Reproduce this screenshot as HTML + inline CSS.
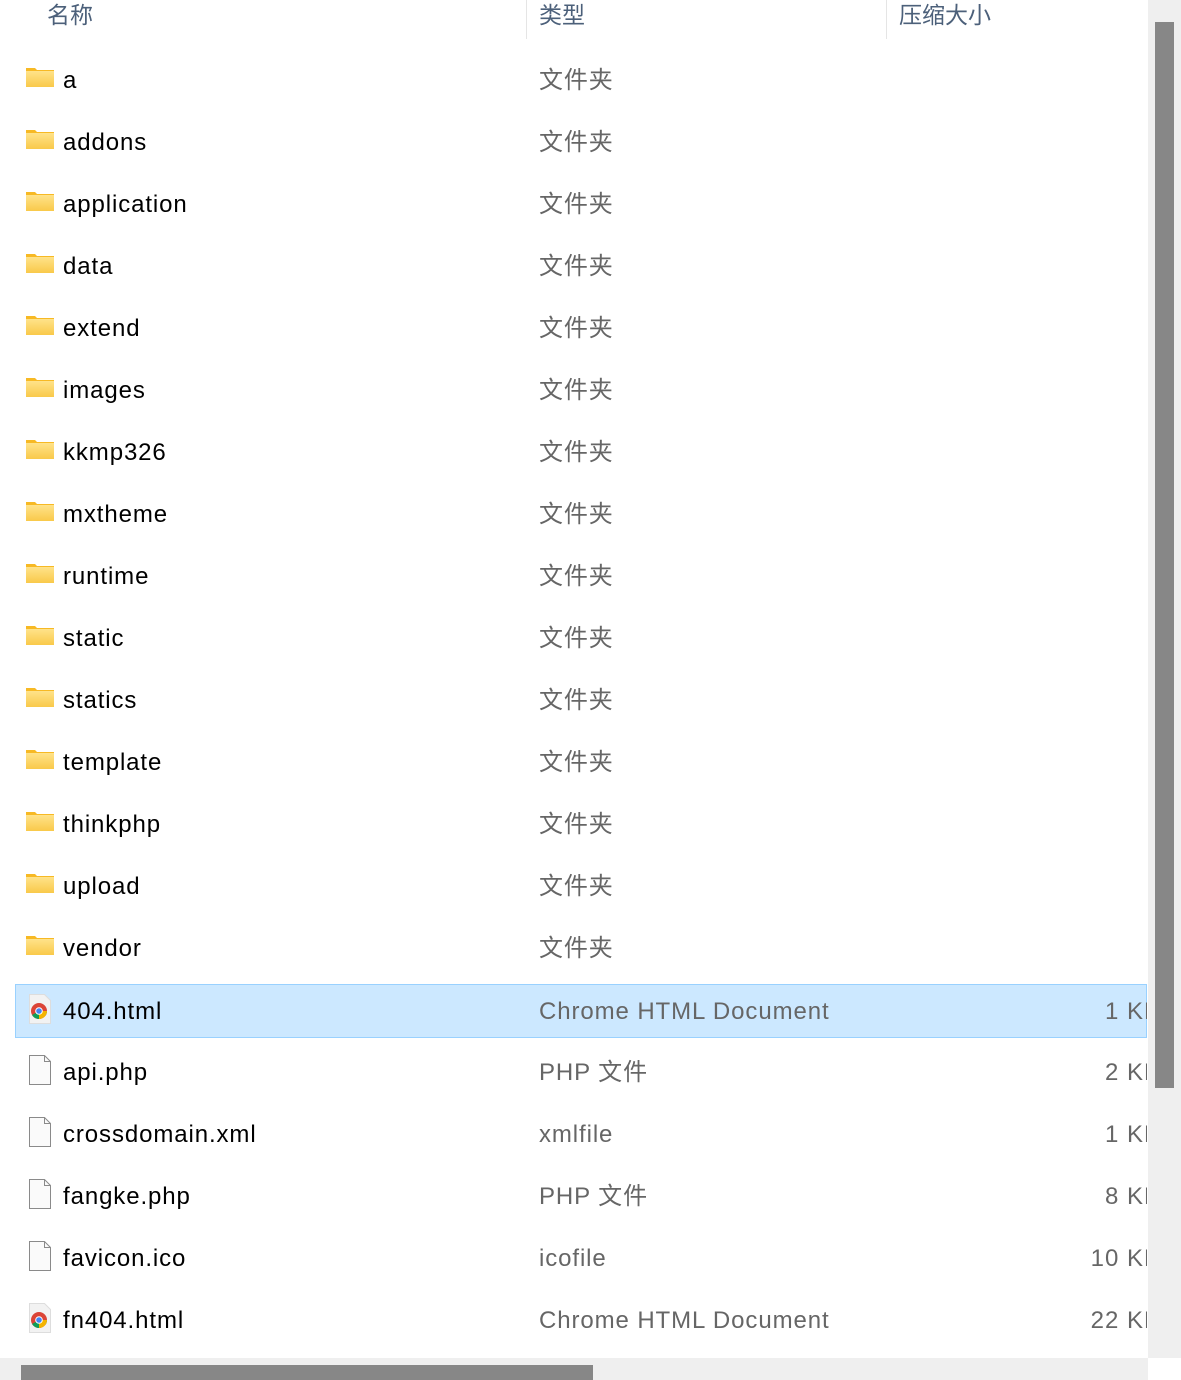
<!DOCTYPE html>
<html><head><meta charset="utf-8"><style>
*{margin:0;padding:0;box-sizing:border-box}
body{width:1181px;height:1380px;background:#fff;position:relative;overflow:hidden;font-family:"Liberation Sans","Noto Sans CJK SC",sans-serif}
.hdr{position:absolute;top:0;font-size:23px;color:#4c607a;line-height:30px;font-family:"Liberation Sans","Noto Sans CJK SC",sans-serif}
.div{position:absolute;top:0;width:1px;height:39px;background:#e5e5e5}
.row{position:absolute;left:15px;width:1132px;height:54px;overflow:hidden}
.row.sel{background:#cce8ff;box-shadow:inset 0 0 0 1px #99d1ff}
.name{position:absolute;left:48px;top:13px;font-size:24px;color:#000;line-height:30px;letter-spacing:0.9px;font-family:"Liberation Sans","Noto Sans CJK SC",sans-serif}
.type{position:absolute;left:524px;top:13px;font-size:24px;color:#666;line-height:30px;letter-spacing:0.9px;font-family:"Liberation Sans","Noto Sans CJK SC",sans-serif}
.size{position:absolute;right:-14px;top:13px;font-size:24px;color:#666;line-height:30px;letter-spacing:1px;font-family:"Liberation Sans",sans-serif;white-space:nowrap}
.ic{position:absolute;left:10px;top:12px}
</style></head><body>
<div class="hdr" style="left:47px">名称</div>
<div class="div" style="left:526px"></div>
<div class="hdr" style="left:539px">类型</div>
<div class="div" style="left:886px"></div>
<div class="hdr" style="left:899px">压缩大小</div>
<div id="rows"></div>
<div style="position:absolute;left:1148px;top:0;width:33px;height:1358px;background:#efefef"></div>
<div style="position:absolute;left:1155px;top:22px;width:19px;height:1066px;background:#878787"></div>
<div style="position:absolute;left:0;top:1358px;width:1148px;height:22px;background:#efefef"></div>
<div style="position:absolute;left:21px;top:1365px;width:572px;height:15px;background:#878787"></div>
<script>
var folder='<svg class="ic" width="30" height="24" viewBox="0 0 30 24"><defs><linearGradient id="g" x1="0" y1="0" x2="0" y2="1"><stop offset="0" stop-color="#ffe38a"/><stop offset="1" stop-color="#f9c94a"/></linearGradient></defs><path d="M1 3h9l2 2h17v16H1z" fill="#f7b924"/><rect x="1" y="6" width="28" height="16" fill="url(#g)"/></svg>';
var file='<svg class="ic" width="30" height="32" viewBox="0 0 30 32" style="top:9px"><path d="M4.5 1.5h15l6 6v23h-21z" fill="#fafafa" stroke="#8a8a8a"/><path d="M19.5 1.5v6h6" fill="none" stroke="#8a8a8a"/></svg>';
var chrome='<svg class="ic" width="30" height="32" viewBox="0 0 30 32" style="top:9px"><path d="M4.5 1.5h15l6 6v23h-21z" fill="#f2f2f2" stroke="#ddd"/><circle cx="14" cy="18" r="8" fill="#db4437"/><path d="M14 18L7.1 22A8 8 0 0 0 14 26L21 22A8 8 0 0 0 22 18z" fill="#0f9d58"/><path d="M14 18h8A8 8 0 0 1 14 26z" fill="#f4b400"/><circle cx="14" cy="18" r="3.8" fill="#fff"/><circle cx="14" cy="18" r="2.8" fill="#4285f4"/></svg>';
var d=[["a"],["addons"],["application"],["data"],["extend"],["images"],["kkmp326"],["mxtheme"],["runtime"],["static"],["statics"],["template"],["thinkphp"],["upload"],["vendor"],
["404.html","Chrome HTML Document","1 KB","c"],["api.php","PHP 文件","2 KB","f"],["crossdomain.xml","xmlfile","1 KB","f"],["fangke.php","PHP 文件","8 KB","f"],["favicon.ico","icofile","10 KB","f"],["fn404.html","Chrome HTML Document","22 KB","c"]];
var h='';
d.forEach(function(r,i){var top=53+62*i;var ic=r.length==1?folder:(r[3]=="c"?chrome:file);
h+='<div class="row'+(i==15?' sel':'')+'" style="top:'+(i==15?top+1:top)+'px">'+ic+'<div class="name">'+r[0]+'</div><div class="type">'+(r[1]||"文件夹")+'</div>'+(r[2]?'<div class="size">'+r[2]+'</div>':'')+'</div>';});
document.getElementById('rows').innerHTML=h;
</script>
</body></html>
